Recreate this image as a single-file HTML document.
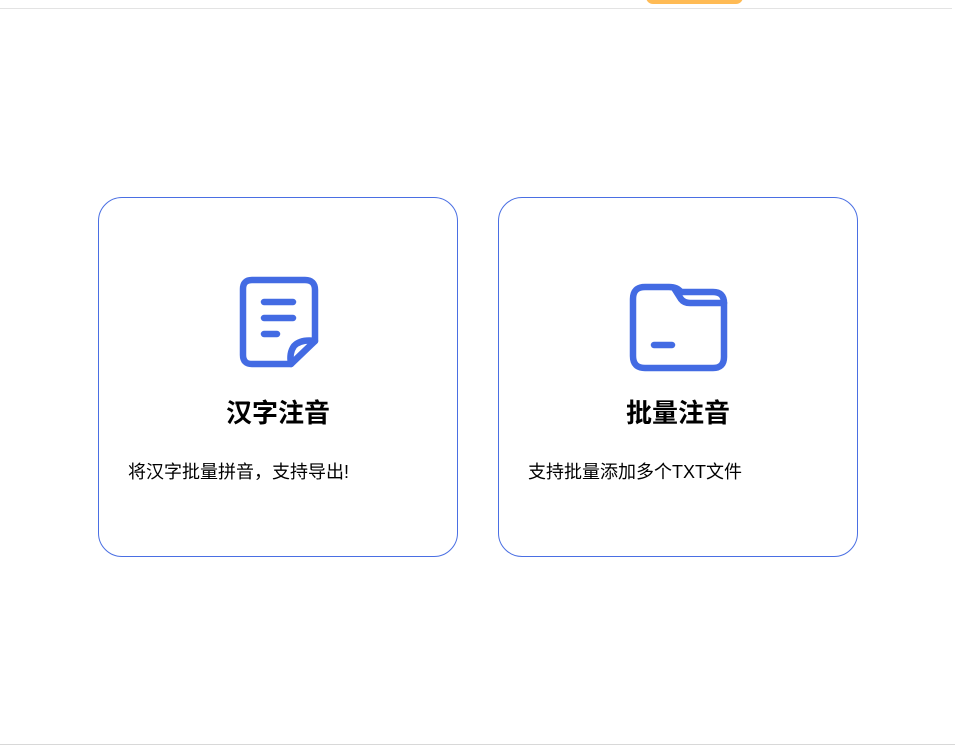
<!DOCTYPE html>
<html><head><meta charset="utf-8"><style>
html,body{margin:0;padding:0;background:#fff;width:955px;height:749px;overflow:hidden;position:relative;font-family:"Liberation Sans","Noto Sans CJK SC",sans-serif;color:#111;}
.top{position:absolute;left:0;top:8px;width:952px;height:1px;background:#e3e3e3;}
.pill{position:absolute;left:646px;top:-10px;width:97px;height:14px;border-radius:7px;background:#ffbb55;}
.bot{position:absolute;left:0;top:744px;width:955px;height:1px;background:#d8d8d8;}
.card{position:absolute;top:197px;width:358px;height:358px;border:1px solid #4a6fe3;border-radius:24px;box-sizing:content-box;}
.card svg{position:absolute;}
.t{position:absolute;width:100%;text-align:center;font-size:26px;font-weight:bold;line-height:30px;color:#000;}
.d{position:absolute;left:29px;font-size:18px;line-height:22px;color:#000;}
</style></head><body>
<div class="top"></div><div class="pill"></div>
<div class="card" style="left:98px">
<svg style="left:0;top:0" width="360" height="360" viewBox="98 197 360 360" fill="none" stroke="#436be3" stroke-width="6.5" stroke-linecap="round" stroke-linejoin="round">
<path d="M251 279 H304 Q314 279 314 289 V340 L290 363 H251 Q242 363 242 354 V288 Q242 279 251 279 Z"/>
<path d="M314 340 Q300 338 293 345 Q288 352 290 363"/>
<path d="M263 301 H292 M263 317 H292 M263 333 H276"/>
</svg>
<div class="t" style="top:200px">汉字注音</div>
<div class="d" style="top:263px">将汉字批量拼音，支持导出!</div>
</div>
<div class="card" style="left:498px">
<svg style="left:0;top:0" width="360" height="360" viewBox="498 197 360 360" fill="none" stroke="#436be3" stroke-width="6.5" stroke-linecap="round" stroke-linejoin="round">
<path d="M644 286 H668 Q676 286 680 291 H712 Q723 291 723 302 V356 Q723 367 712 367 H644 Q632 367 632 355 V298 Q632 286 644 286 Z"/>
<path d="M673 287 L680 298 Q683 302 689 302 H723"/>
<path d="M653 344 H671"/>
</svg>
<div class="t" style="top:200px">批量注音</div>
<div class="d" style="top:263px">支持批量添加多个TXT文件</div>
</div>
<div class="bot"></div>
</body></html>
